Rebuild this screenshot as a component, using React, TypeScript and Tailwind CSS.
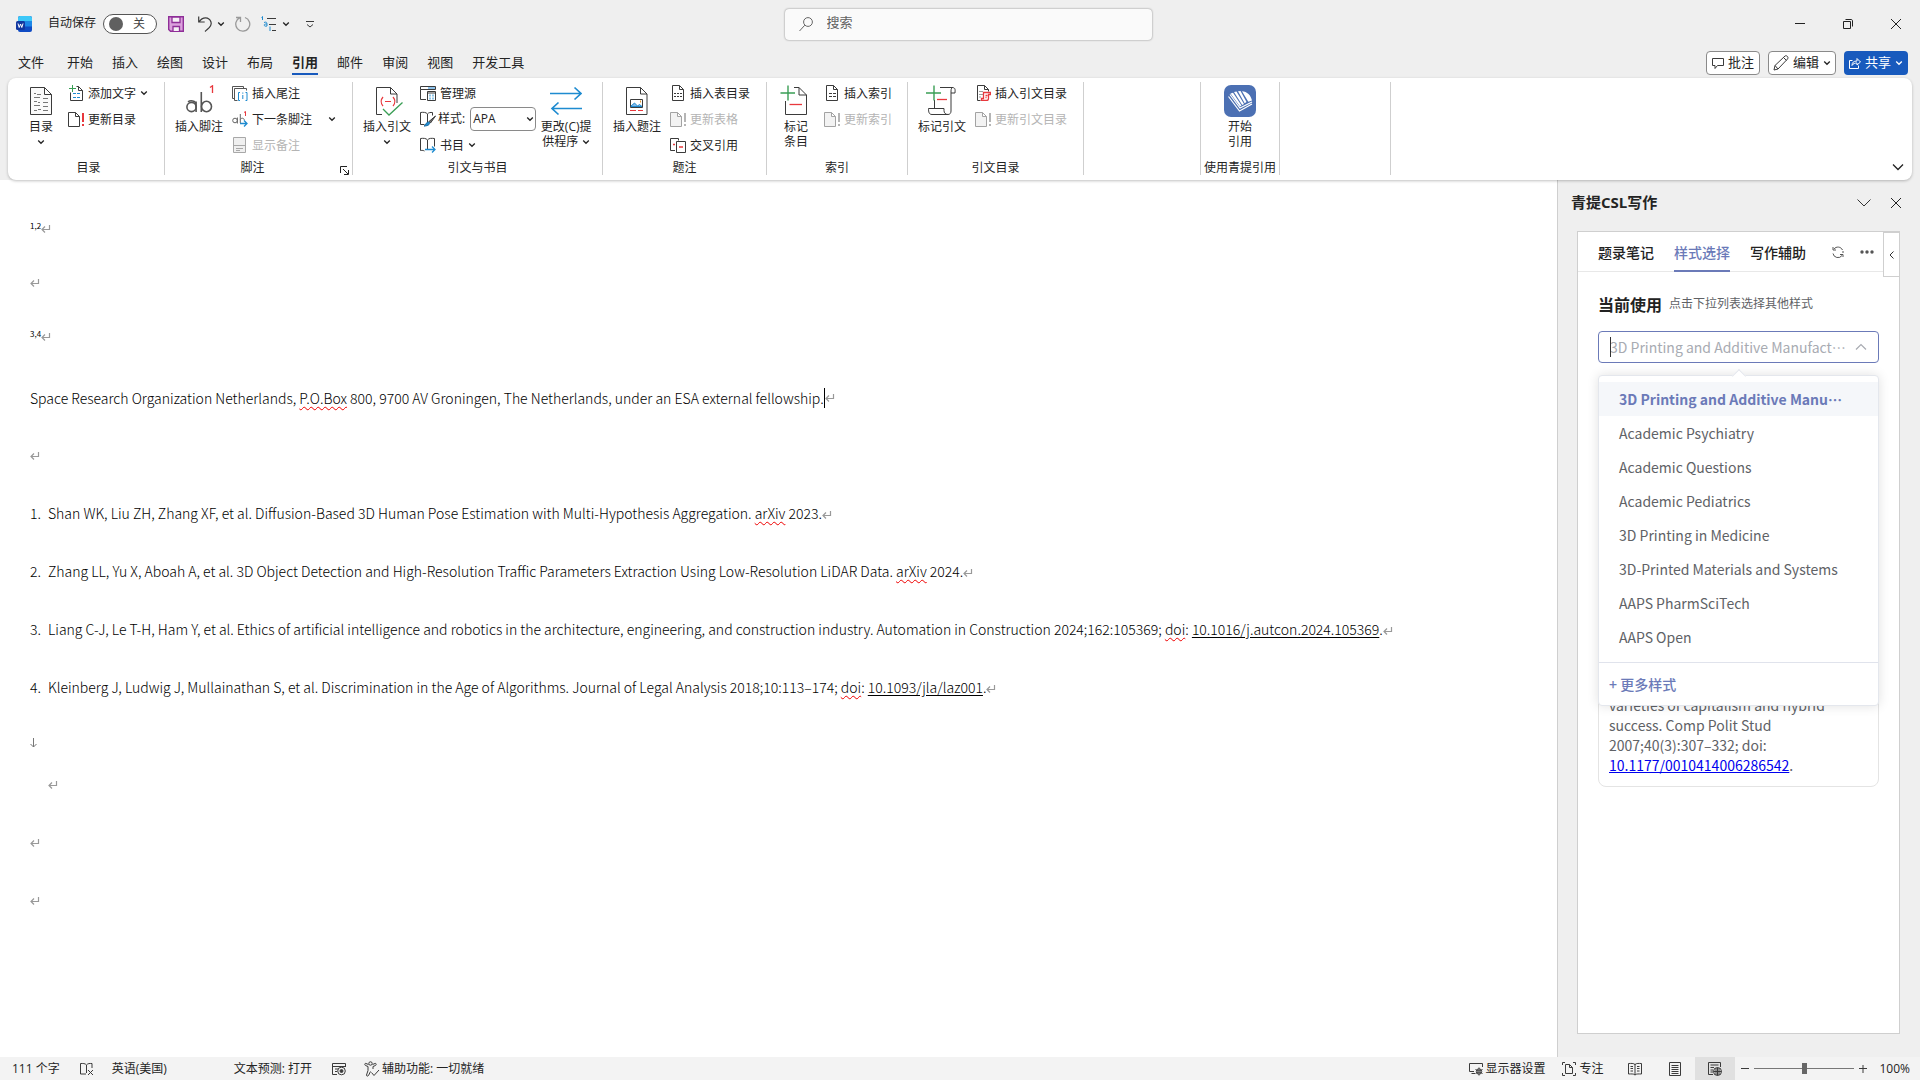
import { useState, type ReactNode } from 'react'
import clsx from 'clsx'

const INK = '#3b3b3b'
const BLUE = '#1e8bd0'
const RED = '#e8383d'
const GREEN = '#3a9e55'

interface IconProps {
  size?: number
  children: ReactNode
}

function Icon({ size = 16, children }: IconProps) {
  return (
    <svg
      width={size}
      height={size}
      viewBox={`0 0 ${size} ${size}`}
      fill="none"
      stroke={INK}
      className="shrink-0"
      aria-hidden="true"
    >
      {children}
    </svg>
  )
}

function Chevron({ className }: { className?: string }) {
  return (
    <svg width="8" height="8" viewBox="0 0 8 8" fill="none" stroke="currentColor" strokeWidth="1.3" className={clsx('shrink-0', className)} aria-hidden="true">
      <path d="M1.2 2.5 4 5.3l2.8-2.8" />
    </svg>
  )
}

/* ---------- ribbon icons ---------- */

const TocIcon = () => (
  <Icon size={32}>
    <path d="M5.5 2.5h14l7 7v20h-21zM19.5 2.5v7h7" fill="#fafafa" />
    <path d="M9 8.5h2M12 9.5h4M9 12.5h6M9 16.5h3M13 17.5h2M18 13.5h5M18 17.5h5M9 20.5h6M18 21.5h5M9 25.5h3M13 24.5h3M18 25.5h5" stroke="#777" />
  </Icon>
)

const AddTextIcon = () => (
  <Icon>
    <path d="M8.5 1.5h2l4 4v10h-12v-8M10.5 1.5v4h4" />
    <path d="M4.5 0v7M1 3.5h7" stroke={GREEN} />
    <path d="M5 8.5h3M9 8.5h3M5 12.5h3M9 12.5h3" stroke={BLUE} />
  </Icon>
)

const UpdateIcon = ({ disabled = false }: { disabled?: boolean }) => (
  <Icon>
    <path d="M.5 1.5h7l4 4v10H.5zM7.5 1.5v4h4" stroke={disabled ? '#a3a3a3' : INK} fill={disabled ? '#f3f3f3' : '#fff'} />
    <path d="M15 2v9M15 13v2" stroke={disabled ? '#b5b5b5' : RED} strokeWidth="2" />
  </Icon>
)

const FootnoteIcon = () => (
  <Icon size={32}>
    <circle cx="8.5" cy="22" r="4.6" strokeWidth="1.6" stroke="#555" />
    <path d="M13.1 16.5v10.6M5 16.8c2-1.5 8-1.8 8 3M18.3 7v20" strokeWidth="1.6" stroke="#555" />
    <ellipse cx="23.5" cy="21.5" rx="5" ry="5.2" strokeWidth="1.6" stroke="#555" />
    <path d="M27 2.5 29.5.8V8" stroke={RED} strokeWidth="1.3" />
  </Icon>
)

const EndnoteIcon = () => (
  <Icon>
    <path d="M2.5 13.5h-2V1.5h11v2M5.5 15.5h-3V3.5h12v2" stroke="#555" />
    <path d="M8 7.5H6.5v8H8M13.5 7.5H15v8h-1.5M10.8 10v4M10.8 7.5v1.2" stroke={BLUE} />
  </Icon>
)

const NextFootnoteIcon = () => (
  <Icon>
    <circle cx="3" cy="9.5" r="2.3" stroke="#666" />
    <path d="M5.4 6.5v6M8.3 3v9" stroke="#666" />
    <path d="M8.3 8.5c1-2 4-1.600 4 .8" stroke="#666" />
    <path d="M12 1.500l1.500-1V5" stroke={RED} />
    <path d="M8 12.500h7M12 9.500l3 3-3 3" stroke={BLUE} strokeWidth="1.300" />
  </Icon>
)

const ShowNotesIcon = () => (
  <Icon>
    <path d="M1.500.5h12v15h-12zM1.500 8.500h12M4 11.500h7M4 13.500h4" stroke="#a8a8a8" fill="#f0f0f0" />
  </Icon>
)

const CitationIcon = () => (
  <Icon size={32}>
    <path d="M11 29.500H5.500v-27h14l6.500 6.500v9M19.500 2.500v6.500H26" />
    <path d="M12 12c-2.500 3-2.500 6 0 9M22 12c2.500 3 2.500 6 0 9M14 16.500h6" stroke={RED} strokeWidth="1.200" />
    <path d="m12 24 6 6L31.500 17.500" stroke={GREEN} strokeWidth="1.300" />
  </Icon>
)

const SourcesIcon = () => (
  <Icon>
    <path d="M.5 1.500h15v3H.5z" />
    <path d="M8 2h7v2H8z" fill="#8cc1ea" stroke="none" />
    <path d="M.5 4.500v10H6M7.500 6.500h8v9h-8zM7.500 8h8" />
    <path d="M9.500 10.500h1M12.500 10.500h1M9.500 13.500h1M12.500 13.500h1" stroke={BLUE} strokeWidth="2" />
  </Icon>
)

const StyleIcon = () => (
  <Icon>
    <path d="M7.500 3v10M7.500 3C6 1 3 1.200.5 1.500v12h4M7.500 3c1-1.500 3-1.700 5-1.500v3" />
    <path d="M15.500 5 9 10.500l1.500 1.500z" fill="#777" />
    <path d="M4 15c2 0 1.500-4 4.500-4 2 0 2 4-4.500 4z" fill={BLUE} stroke="#176ba5" />
  </Icon>
)

const BibliographyIcon = () => (
  <Icon>
    <path d="M7.500 3v10M7.500 3C6 1 3 1.200.5 1.500v12c2-.3 3 0 4 .5M7.500 3c1.500-2 4-1.800 7-1.500v8" />
    <path d="M5 12.500h10M12 9.500l3 3-3 3" stroke={BLUE} strokeWidth="1.300" />
  </Icon>
)

const SwapIcon = () => (
  <Icon size={32}>
    <path d="M0 8.500h31M24.500 2.500l6.500 6-6.500 6M32 23.500H2M8.500 17.500l-6.500 6 6.500 6" stroke={BLUE} strokeWidth="1.700" />
  </Icon>
)

const CaptionIcon = () => (
  <Icon size={32}>
    <path d="M5.500 2.500h14l6.500 6.500v20.500H5.500zM19.500 2.500v6.500H26" />
    <path d="M9.500 14.500h12v8h-12z" fill="#fff" />
    <path d="m10 21 3.500-3 3 3 2-1.500 2.500 2H10z" fill="#83b9ea" stroke={BLUE} />
    <path d="M19 16.500h1" stroke="#e89a2c" strokeWidth="2" />
    <path d="M9 25.500h6M17 25.500h5" stroke={RED} />
  </Icon>
)

const FiguresIcon = () => (
  <Icon>
    <path d="M2.500.5h7l4 4v11h-11zM9.500.5v4h4" />
    <path d="M4 8.500h5M10 8.500h2M4 11.500h2M7 11.500h5" strokeDasharray="2 1" />
  </Icon>
)

const CrossRefIcon = () => (
  <Icon>
    <path d="M5 13.500H.5v-12h8v2" />
    <path d="M6.500 4.500h9v11h-9z" fill="#fff" />
    <path d="M3 7.500h2M9 10h4" stroke={RED} strokeWidth="1.300" />
  </Icon>
)

const MarkEntryIcon = () => (
  <Icon size={32}>
    <path d="M14 2.500h5l7.500 7.500v19.500h-21V16M19 2.500V10h7.500" />
    <path d="M8 .5v15M.5 8H15" stroke={GREEN} strokeWidth="1.400" />
    <path d="M9.500 19.500H22" stroke={RED} strokeWidth="1.300" />
  </Icon>
)

const IndexIcon = () => (
  <Icon>
    <path d="M2.500.5h7l4 4v11h-11zM9.500.5v4h4M5 8.500h3M9 8.500h3M5 11.500h3M9 11.500h3" />
  </Icon>
)

const MarkCitationIcon = () => (
  <Icon size={32}>
    <path d="M14 2.500h12c4 0 3 3 3 5.500h-4M25 8c0-3 0-5 1.500-5.500M25 8v18c0 2-1 3.500-3 3.500H6c-3 0-3.500-2.500-3.500-6H18v2c0 2.500 1.500 4 4 4M8.500 15v8.500" />
    <path d="M8 .5v15M0 8h15" stroke={GREEN} strokeWidth="1.400" />
    <path d="M11 14.500h10" stroke={RED} strokeWidth="1.300" />
  </Icon>
)

const AuthoritiesIcon = () => (
  <Icon>
    <path d="M5.500 15.500h-3V.5h7l4 4v2M9.500.5v4h4" />
    <path d="M4.500 6.500h3M4.500 9.500h3M4.500 12h2" strokeDasharray="1 1" />
    <path d="M8.500 7.500h7v2h-2v4c0 1.500-1 2-2 2h-5v-2h2zM10.500 10.500h2M10.500 12.500h1" stroke={RED} strokeWidth="1.300" />
  </Icon>
)

const QingtiIcon = () => (
  <Icon size={32}>
    <rect width="32" height="32" rx="7" fill="#4c70b3" stroke="none" />
    <path d="M4.500 11.500 15.500 26 28 19M6 9.500 16 23l12-6" stroke="#fff" strokeWidth="1.200" />
    <path d="M6.500 8.500 9 7.700l8.500 12.800-1.500 1zM10 7l2.500-.5 7.500 12.500-1.800 1zM14 6.300l2.500-.2L22.500 17l-1.800 1.200zM18 6.200c5 .3 9 4 10 9.300l-3.700 1.300z" fill="#fff" stroke="none" />
  </Icon>
)

/* ---------- ribbon building blocks ---------- */

interface GroupProps {
  label?: string
  className: string
  launcher?: boolean
  children?: ReactNode
}

function Group({ label, className, launcher, children }: GroupProps) {
  return (
    <section className={clsx('flex shrink-0 flex-col border-r border-[#cfcfcf]', className)}>
      <div className="flex flex-1 items-start gap-[5px]">{children}</div>
      <div className="-ml-1.5 flex h-[15px] items-center">
        <span className="flex-1 text-center leading-[15px] whitespace-nowrap">{label}</span>
        {launcher && (
          <button className="flex w-3 items-end justify-start self-end" aria-label="脚注和尾注">
            <svg width="9" height="9" viewBox="0 0 9 9" fill="none" stroke="#222" aria-hidden="true">
              <path d="M.5 7V.5H7M3 3l5 5M8.500 4v4.500H4" />
            </svg>
          </button>
        )}
      </div>
    </section>
  )
}

function BigButton({ icon, lines, menu, className = 'w-14' }: { icon: ReactNode; lines: string[]; menu?: boolean; className?: string }) {
  return (
    <button className={clsx('flex shrink-0 flex-col items-center pt-[3px] leading-[15px] whitespace-nowrap', className)}>
      <span className="mb-0.5">{icon}</span>
      {lines.map((line, i) => (
        <span key={line} className="flex items-center gap-1">
          {line}
          {menu && i > 0 && i === lines.length - 1 && <Chevron />}
        </span>
      ))}
      {menu && lines.length === 1 && <Chevron className="mt-1" />}
    </button>
  )
}

function SmallButton({ icon, text, menu, disabled }: { icon: ReactNode; text: string; menu?: boolean; disabled?: boolean }) {
  return (
    <button disabled={disabled} className="flex h-[22px] items-center gap-1 leading-[15px] whitespace-nowrap disabled:text-[#b4b4b4]">
      {icon}
      {text}
      {menu && <Chevron />}
    </button>
  )
}

const Rows = ({ children }: { children: ReactNode }) => <div className="flex flex-col items-start gap-1">{children}</div>

function Ribbon() {
  return (
    <div className="relative z-10 mx-2 flex h-[102px] rounded-lg bg-white pt-1 pb-[5px] text-xs shadow-[0_1px_3px_rgba(0,0,0,0.25)]">
      <Group label="目录" className="w-[157px] pl-[11px]">
        <BigButton icon={<TocIcon />} lines={['目录']} menu className="w-11" />
        <Rows>
          <SmallButton icon={<AddTextIcon />} text="添加文字" menu />
          <SmallButton icon={<UpdateIcon />} text="更新目录" />
        </Rows>
      </Group>
      <Group label="脚注" className="w-[188px] pl-1.5" launcher>
        <BigButton icon={<FootnoteIcon />} lines={['插入脚注']} />
        <Rows>
          <SmallButton icon={<EndnoteIcon />} text="插入尾注" />
          <div className="flex items-center gap-4">
            <SmallButton icon={<NextFootnoteIcon />} text="下一条脚注" />
            <button aria-label="脚注导航">
              <Chevron />
            </button>
          </div>
          <SmallButton icon={<ShowNotesIcon />} text="显示备注" disabled />
        </Rows>
      </Group>
      <Group label="引文与书目" className="w-[250px] pl-1.5">
        <BigButton icon={<CitationIcon />} lines={['插入引文']} menu />
        <Rows>
          <SmallButton icon={<SourcesIcon />} text="管理源" />
          <div className="flex h-[22px] items-center gap-[5px]">
            <label htmlFor="cite-style" className="flex items-center gap-0.5 whitespace-nowrap">
              <StyleIcon />
              样式:
            </label>
            <span className="relative flex items-center">
              <select id="cite-style" className="h-6 w-[66px] appearance-none rounded border border-[#8a8a8a] bg-white pl-0.5 leading-4">
                <option>APA</option>
                <option>MLA</option>
                <option>Chicago</option>
              </select>
              <Chevron className="pointer-events-none absolute right-0.5" />
            </span>
          </div>
          <SmallButton icon={<BibliographyIcon />} text="书目" menu />
        </Rows>
        <BigButton icon={<SwapIcon />} lines={['更改(C)提', '供程序']} menu className="w-[50px]" />
      </Group>
      <Group label="题注" className="w-[164px] pl-1.5">
        <BigButton icon={<CaptionIcon />} lines={['插入题注']} />
        <Rows>
          <SmallButton icon={<FiguresIcon />} text="插入表目录" />
          <SmallButton icon={<UpdateIcon disabled />} text="更新表格" disabled />
          <SmallButton icon={<CrossRefIcon />} text="交叉引用" />
        </Rows>
      </Group>
      <Group label="索引" className="w-[141px] pl-1.5">
        <BigButton icon={<MarkEntryIcon />} lines={['标记', '条目']} className="w-[46px]" />
        <Rows>
          <SmallButton icon={<IndexIcon />} text="插入索引" />
          <SmallButton icon={<UpdateIcon disabled />} text="更新索引" disabled />
        </Rows>
      </Group>
      <Group label="引文目录" className="w-[176px] pl-1.5">
        <BigButton icon={<MarkCitationIcon />} lines={['标记引文']} />
        <Rows>
          <SmallButton icon={<AuthoritiesIcon />} text="插入引文目录" />
          <SmallButton icon={<UpdateIcon disabled />} text="更新引文目录" disabled />
        </Rows>
      </Group>
      <Group className="w-[117px]" />
      <Group label="使用青提引用" className="w-[79px] pl-1.5">
        <BigButton icon={<QingtiIcon />} lines={['开始', '引用']} className="w-[66px]" />
      </Group>
      <Group className="w-[111px]" />
      <button className="mr-2 ml-auto self-end pb-1" aria-label="折叠功能区">
        <svg width="12" height="8" viewBox="0 0 12 8" fill="none" stroke="#222" strokeWidth="1.300" aria-hidden="true">
          <path d="m1 1.500 5 5 5-5" />
        </svg>
      </button>
    </div>
  )
}

/* ---------- title bar and tabs ---------- */

function TitleBar() {
  const [autoSave, setAutoSave] = useState(false)

  return (
    <header className="grid h-12 grid-cols-[1fr_367px_1fr] items-center pl-4 text-xs">
      <div className="flex items-center">
        <svg width="16" height="16" viewBox="0 0 16 16" aria-hidden="true">
          <rect x="2" width="14" height="16" rx="2" fill="#0f4bc4" />
          <path d="M2 5.500V2c0-1 1-2 2-2h10c1 0 2 1 2 2v3.500z" fill="#3dc8f8" />
          <path d="M2 5.500h14v5H2z" fill="#1c86e8" />
          <rect y="5" width="9" height="9" rx="1.500" fill="#1237a0" />
          <path d="m2 7.500 1.200 4L4.500 8l1.300 3.500L7 7.500" stroke="#fff" fill="none" />
        </svg>
        <label htmlFor="autosave" className="mr-[7px] ml-4 pb-0.5">自动保存</label>
        <span className="relative flex items-center">
          <input
            id="autosave"
            type="checkbox"
            role="switch"
            checked={autoSave}
            onChange={(e) => setAutoSave(e.target.checked)}
            className="h-5 w-[54px] appearance-none rounded-full border border-[#555] bg-white"
          />
          <span className="pointer-events-none absolute left-1.5 size-3.5 rounded-full bg-[#606060]" />
          <span className="pointer-events-none absolute right-3 leading-4 text-[#444]">{autoSave ? '开' : '关'}</span>
        </span>
        <button aria-label="保存" className="ml-[11px]">
          <Icon>
            <path d="M.7.700h14.600v14.600H2.500L.7 13.500z" fill="#dba0dd" stroke="#8f2e98" strokeWidth="1.400" />
            <path d="M4 1h8v5.500H4zM5 15v-4.500h6.500V15" fill="#f6f0f6" stroke="#8f2e98" strokeWidth="1.300" />
          </Icon>
        </button>
        <button aria-label="撤消" className="ml-3.5">
          <Icon>
            <path d="M.7.500V6h6M1 6c3.500-5.500 10-5.500 12 0 1.500 4.500-3 6.500-6 9.500" strokeWidth="1.200" />
          </Icon>
        </button>
        <button aria-label="撤消选项" className="ml-[3px]"><Chevron /></button>
        <button aria-label="重复" className="ml-2.5">
          <Icon>
            <path d="M1 1.500h4.500V6M10 1.500A7 7 0 1 1 5 1.700" stroke="#999" strokeWidth="1.300" />
          </Icon>
        </button>
        <button aria-label="多级列表" className="ml-2.5">
          <Icon>
            <path d="M6 2.500h9M8 8.500h7M11 14.500h4" />
            <path d="m.5 1.500 1-1V4M3 6.500c3-1 3 0 3 3.500-3 1-4-2-1-2h1M9 10.500v4.500" stroke={BLUE} />
          </Icon>
        </button>
        <button aria-label="多级列表选项" className="ml-[5px]"><Chevron /></button>
        <button aria-label="自定义快速访问工具栏" className="ml-4">
          <Icon size={8}>
            <path d="M0 1.500h8M1 4.500 4 7l3-2.500" />
          </Icon>
        </button>
      </div>

      <label className="flex h-[31px] items-center gap-3.5 rounded bg-[#fafafa] px-3.5 shadow-[0_0_2px_rgba(0,0,0,0.5)]">
        <svg width="14" height="15" viewBox="0 0 14 15" fill="none" stroke="#666" aria-hidden="true">
          <circle cx="9" cy="5" r="4.400" />
          <path d="M5.800 8.200.5 14" />
        </svg>
        <input type="search" aria-label="搜索" placeholder="搜索" className="min-w-0 flex-1 bg-transparent pb-0.5 text-[13px] outline-none placeholder:text-[#616161]" />
      </label>

      <div className="flex justify-end">
        <button aria-label="最小化" className="flex h-8 w-12 items-center justify-center">
          <Icon size={10}><path d="M0 4.500h10" stroke="#222" /></Icon>
        </button>
        <button aria-label="还原" className="flex h-8 w-12 items-center justify-center">
          <Icon size={10}>
            <path d="M.5 2.500h7v7h-7zM2.500.5H8c1 0 1.500.5 1.500 1.500v5.500" stroke="#222" />
          </Icon>
        </button>
        <button aria-label="关闭" className="flex h-8 w-12 items-center justify-center">
          <Icon size={10}><path d="m0 0 10 10M10 0 0 10" stroke="#222" /></Icon>
        </button>
      </div>
    </header>
  )
}

const TABS = ['开始', '插入', '绘图', '设计', '布局', '引用', '邮件', '审阅', '视图', '开发工具']

function TabBar() {
  const [active, setActive] = useState('引用')

  return (
    <div className="flex h-[30px] items-center px-3 pl-[18px] text-[13px]">
      <nav className="flex items-center gap-[19px] leading-5">
        <button className="mr-1 border-b-2 border-transparent py-px">文件</button>
        {TABS.map((tab) => (
          <button
            key={tab}
            onClick={() => setActive(tab)}
            className={clsx('border-b-2 py-px', tab === active ? 'border-[#185abd] font-bold' : 'border-transparent')}
          >
            {tab}
          </button>
        ))}
      </nav>
      <div className="ml-auto flex gap-2 leading-5">
        <button className="flex h-6 w-[54px] items-center justify-center gap-1 rounded border border-[#8a8a8a] bg-white">
          <Icon size={12}><path d="M.5 1.500h11v7h-6L3 11.500v-3H.5z" /></Icon>
          <span className="pb-[3px]">批注</span>
        </button>
        <button className="flex h-6 w-[68px] items-center justify-center gap-1 rounded border border-[#8a8a8a] bg-white">
          <Icon>
            <path d="m1 15 1-4.500L12 1c1.500-1 4 1 2.500 3L5 14zM10.500 2.500l3 3M2 10.500 5 14" />
          </Icon>
          <span className="pb-[3px]">编辑</span>
          <Chevron />
        </button>
        <button className="flex h-6 w-16 items-center justify-center gap-1 rounded bg-[#185abd] text-white">
          <svg width="12" height="12" viewBox="0 0 12 12" fill="none" stroke="#fff" aria-hidden="true">
            <path d="M3.500 3.500h-3v8h9v-3M3 8.500c0-3 1.500-4.500 5-4.500V1.500l3.500 3.500L8 8V6C6 6 4 6.500 3 8.500z" />
          </svg>
          <span className="pb-[3px]">共享</span>
          <Chevron />
        </button>
      </div>
    </div>
  )
}

/* ---------- document ---------- */

const Mark = () => (
  <svg width="10" height="10" viewBox="0 0 10 10" fill="none" stroke="#999" className="inline-block" aria-hidden="true">
    <path d="M8.500 1v4.500H1M4 2.500l-3 3 3 3" strokeWidth="1.200" />
  </svg>
)

const Typo = ({ children }: { children: ReactNode }) => (
  <span className="underline decoration-[#e00] decoration-wavy decoration-1 underline-offset-2">{children}</span>
)

const Entry = ({ n, children }: { n: number; children: ReactNode }) => (
  <li className="flex h-[58px] items-center">
    <span className="w-[18px] shrink-0">{n}.</span>
    <p className="whitespace-nowrap">
      {children}
      <Mark />
    </p>
  </li>
)

function Doc() {
  return (
    <main className="min-w-0 flex-1 overflow-hidden bg-white pt-[21px] pl-[30px] font-['Noto_Sans_CJK_SC',sans-serif] text-sm font-light text-black">
      <p className="flex h-14 items-center text-[8px] font-normal"><span className="pb-1.5">1,2</span><Mark /></p>
      <p className="flex h-13 items-center"><Mark /></p>
      <p className="flex h-14 items-center text-[8px] font-normal"><span className="pb-1.5">3,4</span><Mark /></p>
      <p className="mt-1 flex h-[58px] items-center whitespace-nowrap">
        <span>
          Space Research Organization Netherlands, <Typo>P.O.Box</Typo> 800, 9700 AV Groningen, The Netherlands, under an ESA external fellowship.
        </span>
        <span className="h-5 w-px bg-black" />
        <Mark />
      </p>
      <p className="flex h-[57px] items-center"><Mark /></p>
      <ol>
        <Entry n={1}>
          Shan WK, Liu ZH, Zhang XF, et al. Diffusion-Based 3D Human Pose Estimation with Multi-Hypothesis Aggregation. <Typo>arXiv</Typo> 2023.
        </Entry>
        <Entry n={2}>
          Zhang LL, Yu X, Aboah A, et al. 3D Object Detection and High-Resolution Traffic Parameters Extraction Using Low-Resolution LiDAR Data. <Typo>arXiv</Typo> 2024.
        </Entry>
        <Entry n={3}>
          Liang C-J, Le T-H, Ham Y, et al. Ethics of artificial intelligence and robotics in the architecture, engineering, and construction industry. Automation in Construction 2024;162:105369; <Typo>doi</Typo>:{' '}
          <a href="#autcon" className="underline underline-offset-2">10.1016/j.autcon.2024.105369</a>.
        </Entry>
        <Entry n={4}>
          Kleinberg J, Ludwig J, Mullainathan S, et al. Discrimination in the Age of Algorithms. Journal of Legal Analysis 2018;10:113–174; <Typo>doi</Typo>:{' '}
          <a href="#jla" className="underline underline-offset-2">10.1093/jla/laz001</a>.
        </Entry>
      </ol>
      <div className="pt-1.5 pb-2">
        <p className="flex h-[42px] items-center">
          <svg width="8" height="10" viewBox="0 0 8 10" fill="none" stroke="#777" aria-hidden="true">
            <path d="M3.500 0v9M.5 6l3 3 3-3" />
          </svg>
        </p>
        <p className="flex h-[42px] items-center pl-[18px]"><Mark /></p>
      </div>
      <p className="flex h-[58px] items-center"><Mark /></p>
      <p className="flex h-[58px] items-center"><Mark /></p>
    </main>
  )
}

/* ---------- side pane ---------- */

const STYLES = [
  '3D Printing and Additive Manu⋯',
  'Academic Psychiatry',
  'Academic Questions',
  'Academic Pediatrics',
  '3D Printing in Medicine',
  '3D-Printed Materials and Systems',
  'AAPS PharmSciTech',
  'AAPS Open',
]

function StyleSelect() {
  const [selected, setSelected] = useState(STYLES[0])

  return (
    <div className="relative mt-[15px]">
      <div className="relative flex items-center">
        <input
          id="style-select"
          role="combobox"
          aria-expanded="true"
          aria-controls="style-list"
          placeholder="3D Printing and Additive Manufact⋯"
          className="h-8 w-full rounded border border-[#6b7ab8] bg-white pr-8 pl-[11px] text-sm outline-none placeholder:text-[#a8abb2]"
        />
        <span className="absolute left-3 h-5 w-px bg-[#333]" />
        <svg width="12" height="8" viewBox="0 0 12 8" fill="none" stroke="#a8abb2" strokeWidth="1.200" className="absolute right-3" aria-hidden="true">
          <path d="m1 6.500 5-5 5 5" />
        </svg>
      </div>
      <div className="absolute inset-x-0 top-full z-10 mt-3 rounded border border-[#e4e7ed] bg-white shadow-[0_0_12px_rgba(0,0,0,0.12)]">
        <span className="absolute -top-[5px] left-1/2 size-2.5 -translate-x-1/2 rotate-45 border-t border-l border-[#e4e7ed] bg-white" />
        <ul id="style-list" role="listbox" aria-label="样式" className="relative border-b border-[#e0e3ec] py-1.5 pb-2">
          {STYLES.map((style) => (
            <li
              key={style}
              role="option"
              aria-selected={style === selected}
              onClick={() => setSelected(style)}
              className={clsx(
                'h-[34px] cursor-pointer px-5 leading-[34px] whitespace-nowrap',
                style === selected ? 'bg-[#f5f7fa] font-bold text-[#6b7ab8]' : 'text-[#606266]'
              )}
            >
              {style}
            </li>
          ))}
        </ul>
        <button className="flex h-[42px] items-center px-2.5 font-medium text-[#6b7ab8]">+ 更多样式</button>
      </div>
    </div>
  )
}

function SidePane() {
  return (
    <aside className="flex w-[363px] shrink-0 flex-col border-l border-[#cfcfcf] bg-[#efefef] pr-5 pb-[23px] pl-[19px]">
      <div className="-mr-1 -ml-1.5 flex h-[51px] items-center pb-1.5">
        <h2 className="flex-1 text-[15px] font-bold">青提CSL写作</h2>
        <button aria-label="任务窗格选项" className="mr-5">
          <svg width="14" height="8" viewBox="0 0 14 8" fill="none" stroke="#333" aria-hidden="true"><path d="m.5.5 6.500 6.500L13.500.5" /></svg>
        </button>
        <button aria-label="关闭窗格" className="mr-[3px]">
          <Icon size={10}><path d="m0 0 10 10M10 0 0 10" stroke="#222" /></Icon>
        </button>
      </div>
      <div lang="zh-CN" className="relative flex-1 border border-[#cfcfcf] bg-white font-['Noto_Sans_CJK_SC',sans-serif] text-sm text-[#606266]">
        <div className="flex h-10 items-stretch gap-5 border-b border-[#e8e8e8] pl-5 font-medium text-[#222]">
          <button>题录笔记</button>
          <button className="-mb-px border-b-2 border-[#6b7ab8] pt-0.5 text-[#6b7ab8]">样式选择</button>
          <button>写作辅助</button>
          <button aria-label="刷新" className="ml-1.5">
            <Icon size={12}>
              <path d="M10.500 4A5 5 0 0 0 2 3M1 7.500A5 5 0 0 0 10 9.500M1 1v3h3M11 11V8.500H8M11 5v2" stroke="#555" />
            </Icon>
          </button>
          <button aria-label="更多" className="-ml-1">
            <svg width="14" height="4" viewBox="0 0 14 4" fill="#555" aria-hidden="true">
              <circle cx="2" cy="2" r="1.700" /><circle cx="7" cy="2" r="1.700" /><circle cx="12" cy="2" r="1.700" />
            </svg>
          </button>
        </div>
        <button aria-label="收起" className="absolute top-0 -right-px flex h-[45px] w-[17px] items-center justify-center border border-[#cfcfcf] bg-white">
          <svg width="5" height="8" viewBox="0 0 5 8" fill="none" stroke="#333" aria-hidden="true"><path d="M4.500.5 1 4l3.500 3.500" /></svg>
        </button>
        <div className="px-5 pt-5">
          <div className="flex h-6 items-center gap-[7px]">
            <label htmlFor="style-select" className="text-base font-bold text-[#222]">当前使用</label>
            <span className="pb-0.5 text-xs">点击下拉列表选择其他样式</span>
          </div>
          <StyleSelect />
          <p className="mt-4 flex h-[408px] items-end rounded-lg border border-[#e4e4e4] px-2.5 pb-[11px] leading-5">
            <span>
              varieties of capitalism and hybrid success. Comp Polit Stud 2007;40(3):307–332; doi:{' '}
              <a href="#cps" className="text-[#0000ee] underline">10.1177/0010414006286542</a>.
            </span>
          </p>
        </div>
      </div>
    </aside>
  )
}

/* ---------- status bar ---------- */

function StatusBar() {
  return (
    <footer className="flex h-[23px] items-center bg-[#f3f3f3] text-xs leading-4 whitespace-nowrap">
      <button className="ml-3">111 个字</button>
      <button aria-label="校对" className="ml-5">
        <Icon size={14}>
          <path d="M6.500 3v8M6.500 3C5 1.200 3 1.500.5 1.500v10.500H6M6.500 3c1.500-1.800 3-1.500 5.500-1.500V6M8 8l5 5M13 8l-5 5" />
        </Icon>
      </button>
      <button className="ml-[18px]">英语(美国)</button>
      <button className="ml-[67px]">文本预测: 打开</button>
      <button aria-label="宏录制" className="ml-5">
        <Icon size={14}>
          <path d="M5 12.500H.5v-11h13V5M.5 4.500h13M3 7h3M3 9.500h2" />
          <circle cx="9.500" cy="9" r="3.800" fill="#f3f3f3" /><circle cx="9.500" cy="9" r="1.500" fill={INK} />
        </Icon>
      </button>
      <button className="ml-[18px] flex items-center gap-0.5">
        <Icon>
          <circle cx="6.500" cy="2.500" r="1.700" />
          <path d="M4.500 3.500 2 2.500C.5 2 .5 4 1.500 4.500l2.500 1v4L2.500 14c0 1.500 1.500 1.200 2 .5l2-4M8.500 3.500 11 2.500c1.500-.5 1.500 1.500.5 2L9 5.500V8M7.500 11.500l2.500 3L15 9" />
        </Icon>
        辅助功能: 一切就绪
      </button>

      <div className="ml-auto flex items-center self-stretch">
        <button className="mr-[17px] flex items-center gap-0.5">
          <Icon size={14}>
            <path d="M5 9.500H.5v-8h13V5M2.500 11.500H6" />
            <circle cx="10" cy="9.500" r="2.700" /><path d="M10 5.500v8M6.500 7.500l7 4M13.500 7.500l-7 4" /><circle cx="10" cy="9.500" r="1" fill="#fff" />
          </Icon>
          显示器设置
        </button>
        <button className="mr-[25px] flex items-center gap-[3px]">
          <Icon size={14}>
            <path d="M3 .5H.5V3M11 .5h2.500V3M3 13.500H.5V11M11 13.500h2.500V11M3.500 2.500h4l3 3v6h-7zM7.500 2.500v3h3" />
          </Icon>
          专注
        </button>
        <button aria-label="阅读视图" className="mr-[26px]">
          <Icon size={14}>
            <path d="M7 2v11M7 2.500C5.500 1 3 1.500.5 1.500v10.500c2.500 0 5-.5 6.500 1M7 2.500c1.500-1.500 4-1 6.500-1v10.500c-2.500 0-5-.5-6.500 1M2.500 4.500H5M2.500 6.500H5M2.500 9H5M9 4.500h2.500M9 6.500h2.500M9 9h2.500" />
          </Icon>
        </button>
        <button aria-label="页面视图" className="mr-[13px]">
          <Icon size={14}><path d="M1.500.5h11v13h-11zM3.500 3.500h7M3.500 5.500h7M3.500 7.500h7M3.500 9.500h7M3.500 11.500h7" /></Icon>
        </button>
        <button aria-label="Web 版式视图" className="flex w-10 items-center justify-center self-stretch bg-[#e0e0e0]">
          <Icon size={14}>
            <path d="M5 12.500H.5V.5h12V5M2.500 3h8M2.500 5.500H6M2.500 8H5M2.500 10H5" />
            <circle cx="9.500" cy="9.500" r="4" fill="#e0e0e0" /><path d="M5.500 9.500h8M9.500 5.500v8M8 6v7M11 6v7" />
          </Icon>
        </button>
        <button aria-label="缩小" className="ml-1.5"><Icon size={8}><path d="M0 3.500h8" /></Icon></button>
        <input
          type="range"
          aria-label="缩放"
          defaultValue={50}
          className="mx-[5px] h-3 w-[100px] appearance-none bg-[linear-gradient(#777,#777)] bg-[length:100%_1px] bg-center bg-no-repeat [&::-webkit-slider-thumb]:h-[11px] [&::-webkit-slider-thumb]:w-[5px] [&::-webkit-slider-thumb]:appearance-none [&::-webkit-slider-thumb]:bg-[#666]"
        />
        <button aria-label="放大"><Icon size={8}><path d="M0 3.500h8M4 0v8" /></Icon></button>
        <button className="mr-2.5 ml-3">100%</button>
      </div>
    </footer>
  )
}

export default function App() {
  return (
    <div className="flex h-screen flex-col overflow-hidden bg-[#efefef] font-['Open_Sans','Noto_Sans_CJK_SC',sans-serif] text-[#242424]">
      <TitleBar />
      <TabBar />
      <Ribbon />
      <div className="flex min-h-0 flex-1">
        <Doc />
        <SidePane />
      </div>
      <StatusBar />
    </div>
  )
}
